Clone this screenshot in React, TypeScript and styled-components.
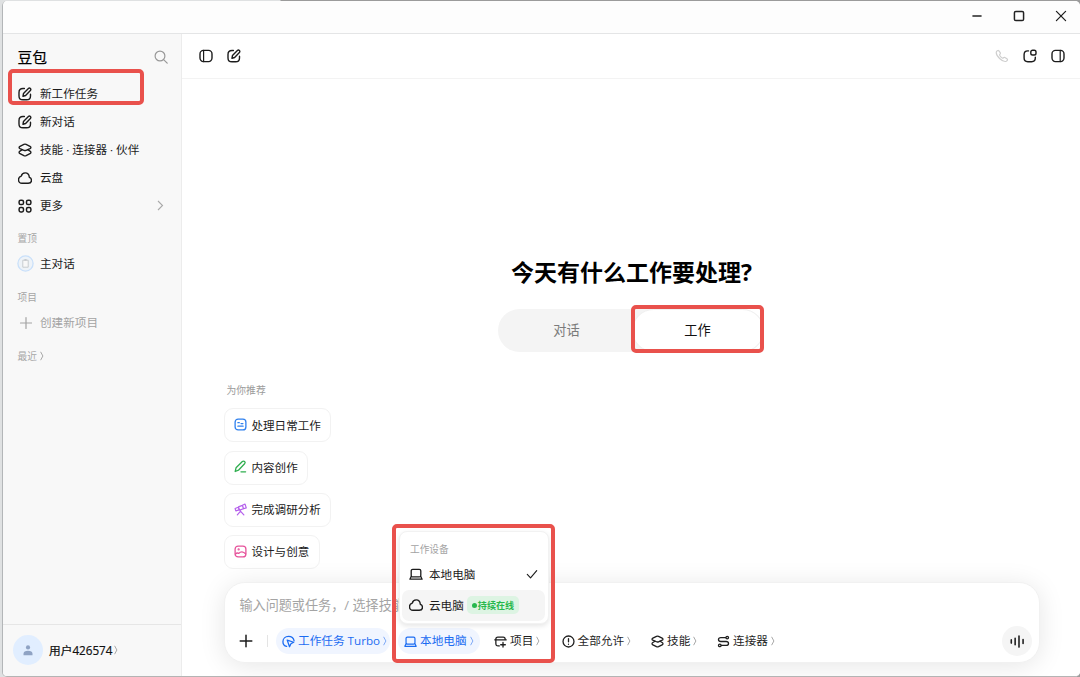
import React from "react";
import styled, { createGlobalStyle } from "styled-components";

const Global = createGlobalStyle`
  * { box-sizing: border-box; }
  html, body { margin: 0; padding: 0; overflow: hidden; }
  body {
    background: #e4e6e7;
    font-family: "Open Sans", "Noto Sans CJK SC", sans-serif;
    color: #1c1c1c;
    -webkit-font-smoothing: antialiased;
  }
`;

const Desktop = styled.div`
  width: 1080px;
  height: 677px;
  padding: 1px 0 0 2px;
  background: linear-gradient(90deg, #dfe1e2 0, #dfe1e2 280px, #9b9b9b 281px);
`;
const Window = styled.div`
  height: 676px;
  display: flex;
  flex-direction: column;
  background: #fff;
  border-left: 1px solid #b3b6b8;
  border-bottom: 1px solid #b4b4b4;
  border-radius: 5px;
  overflow: hidden;
`;
const TitleBar = styled.div`
  height: 32px;
  flex: none;
  display: flex;
  justify-content: flex-end;
  align-items: center;
  gap: 26px;
  padding: 0 11px 2px 0;
  background: #fdfdfd;
`;
const Body = styled.div`
  flex: 1;
  display: flex;
  min-height: 0;
  border-top: 1px solid #e4e5e6;
`;

const Sidebar = styled.aside`
  width: 179px;
  display: flex;
  flex-direction: column;
  background: #f8f8f8;
  border-right: 1px solid #ececec;
`;
const Brand = styled.div`
  display: flex;
  align-items: center;
  justify-content: space-between;
  height: 46px;
  padding: 0 13px 0 14.5px;
  font-size: 14.8px;
  color: #000;
  -webkit-text-stroke: 0.2px #000;
`;
const BrandName = styled.span`
  line-height: 20px;
`;
const NavItem = styled.div<{ $muted?: boolean }>`
  position: relative;
  height: 27.9px;
  flex: none;
  display: flex;
  align-items: center;
  gap: 8px;
  padding: 0 17px 0 15px;
  font-size: 11.6px;
  line-height: 16px;
  color: ${(p) => (p.$muted ? "#a3a3a3" : "#1c1c1c")};
  svg { flex: none; }
`;
const Grow = styled.span`
  flex: 1;
`;
const SectionLabel = styled.div<{ $top: number }>`
  height: 14px;
  flex: none;
  display: flex;
  align-items: center;
  gap: 3px;
  margin-top: ${(p) => p.$top}px;
  padding-left: 14.5px;
  font-size: 9.7px;
  color: #a6a6a6;
`;
const Pinned = styled(NavItem)`
  margin-top: 5px;
  padding-left: 14px;
  gap: 6px;
`;
const Create = styled(NavItem)`
  margin-top: 5px;
`;
const Account = styled.div`
  margin-top: auto;
  height: 52px;
  display: flex;
  align-items: center;
  gap: 6px;
  padding: 0 0 0.5px 10px;
  border-top: 1px solid #e6e6e6;
  font-size: 11.7px;
  color: #111;
`;
const Avatar = styled.div`
  width: 30px;
  height: 30px;
  border-radius: 50%;
  background: #e1eeff;
  display: grid;
  place-items: center;
`;
const AccountName = styled.span`
  display: flex;
  align-items: center;
  gap: 2px;
  padding-bottom: 1px;
  -webkit-text-stroke: 0.2px #111;
`;

const Highlight = styled.div<{ $t: number; $l: number; $w: number; $h: number }>`
  position: absolute;
  top: ${(p) => p.$t}px;
  left: ${(p) => p.$l}px;
  width: ${(p) => p.$w}px;
  height: ${(p) => p.$h}px;
  border: 4px solid #e9514c;
  border-radius: 5px;
  pointer-events: none;
  z-index: 5;
`;

const Main = styled.main`
  flex: 1;
  min-width: 0;
  display: flex;
  flex-direction: column;
  background: #fff;
`;
const Header = styled.header`
  height: 45px;
  flex: none;
  display: flex;
  align-items: center;
  justify-content: space-between;
  padding: 0 15px 0 16.5px;
  border-bottom: 1px solid #f3f3f3;
`;
const IconRow = styled.div`
  display: flex;
  align-items: center;
  gap: 14px;
`;
const Stage = styled.section`
  flex: 1;
  display: flex;
  flex-direction: column;
  padding: 0 40px 13px 42px;
`;
const Hero = styled.div`
  display: flex;
  flex-direction: column;
  align-items: center;
  padding-top: 175px;
`;
const Title = styled.h1`
  margin: 0 1px 0 0;
  height: 37px;
  line-height: 37px;
  font-size: 23px;
  font-weight: 700;
  color: #000;
  white-space: nowrap;
`;
const Segmented = styled.div`
  position: relative;
  width: 266px;
  height: 43px;
  margin-top: 18px;
  margin-right: 2px;
  display: flex;
  border-radius: 22px;
  background: #f4f4f4;
`;
const Segment = styled.div<{ $on?: boolean }>`
  flex: 1;
  display: grid;
  place-items: center;
  padding: 0 ${(p) => (p.$on ? 1 : 0)}px 2px ${(p) => (p.$on ? 0 : 3)}px;
  border-radius: 22px;
  font-size: 13.2px;
  color: ${(p) => (p.$on ? "#111" : "#7b7b7b")};
  background: ${(p) => (p.$on ? "#fff" : "transparent")};
  border: 1px solid ${(p) => (p.$on ? "#f0f0f0" : "transparent")};
`;

const Suggestions = styled.div`
  display: flex;
  flex-direction: column;
  align-items: flex-start;
  gap: 8.3px;
  margin-top: 31px;
`;
const SuggestLabel = styled.div`
  height: 16px;
  margin-bottom: 1px;
  line-height: 16px;
  padding-left: 2.5px;
  font-size: 9.8px;
  color: #9b9b9b;
`;
const Suggestion = styled.div`
  height: 34px;
  display: flex;
  align-items: center;
  gap: 4.5px;
  padding: 0 9.5px 1.5px 9px;
  border: 1px solid #f2f2f2;
  border-radius: 9px;
  font-size: 11.55px;
  color: #222;
`;

const Composer = styled.div`
  position: relative;
  height: 81px;
  margin-top: auto;
  display: flex;
  flex-direction: column;
  justify-content: space-between;
  padding: 11px 7px 6px 9px;
  border: 1px solid #f1f1f1;
  border-radius: 21px;
  background: #fff;
  box-shadow: 0 3px 26px rgba(0, 0, 0, 0.1);
`;
const Placeholder = styled.div`
  height: 22px;
  line-height: 22px;
  padding-left: 5.5px;
  font-size: 13.1px;
  color: #a4a4a4;
  white-space: nowrap;
`;
const Toolbar = styled.div`
  display: flex;
  align-items: center;
  height: 30px;
`;
const Plus = styled.span`
  width: 24px;
  display: grid;
  place-items: center;
`;
const Divider = styled.span`
  width: 1px;
  height: 12px;
  margin: 0 8px 0 9px;
  background: #e4e4e4;
`;
const Tool = styled.div<{ $w: number; $active?: boolean; $ml?: number }>`
  width: ${(p) => p.$w}px;
  margin-left: ${(p) => p.$ml ?? 0}px;
  height: 26px;
  flex: none;
  display: flex;
  align-items: center;
  gap: 3px;
  padding-left: 6px;
  border-radius: 13px;
  font-size: 11.65px;
  white-space: nowrap;
  color: ${(p) => (p.$active ? "#1b6cf2" : "#1f1f1f")};
  background: ${(p) => (p.$active ? "#f0f5ff" : "transparent")};
  svg { flex: none; }
`;
const ToolText = styled.span`
  line-height: 16px;
`;
const Voice = styled.div`
  width: 30px;
  height: 30px;
  margin-left: auto;
  border-radius: 50%;
  background: #f5f5f5;
  display: grid;
  place-items: center;
`;

const Menu = styled.div`
  position: absolute;
  left: 174px;
  top: -52px;
  width: 150px;
  height: 93px;
  padding: 8px 3px 3px 2px;
  border-radius: 8px;
  border: 1px solid #f2f2f2;
  background: #fff;
  box-shadow: 0 2px 5px rgba(0, 0, 0, 0.1);
`;
const MenuLabel = styled.div`
  height: 18px;
  line-height: 19px;
  padding-left: 8px;
  font-size: 9.7px;
  color: #a3a3a3;
`;
const MenuItem = styled.div<{ $hover?: boolean }>`
  height: 31.5px;
  display: flex;
  align-items: center;
  gap: 6px;
  padding: 0 7px 0 7px;
  border-radius: 7px;
  font-size: 11.6px;
  color: #1c1c1c;
  background: ${(p) => (p.$hover ? "#f5f5f5" : "transparent")};
  svg { flex: none; }
`;
const Badge = styled.span`
  height: 18px;
  display: flex;
  align-items: center;
  gap: 1px;
  margin-left: -3px;
  padding: 0 5px;
  border-radius: 5px;
  background: #ddf4e3;
  color: #27b84c;
  font-size: 9.1px;
  font-weight: 700;
  white-space: nowrap;
`;
const Dot = styled.i`
  width: 5px;
  height: 5px;
  border-radius: 50%;
  background: currentColor;
`;

type IconProps = {
  size?: number;
  color?: string;
  sw?: number;
  children?: React.ReactNode;
};
const Icon = ({ size = 14, color = "currentColor", sw = 1.4, children }: IconProps) => (
  <svg
    width={size}
    height={size}
    viewBox="0 0 14 14"
    fill="none"
    stroke={color}
    strokeWidth={sw}
    strokeLinecap="round"
    strokeLinejoin="round"
  >
    {children}
  </svg>
);

const Compose = (p: IconProps) => (
  <Icon {...p}>
    <path d="M6.400 1.500H5C2.400 1.500 1 2.900 1 5.400v3.500c0 2.500 1.400 3.900 4 3.900h3.500c2.600 0 4-1.400 4-3.900V7.300" />
    <path d="M5 9.200l.5-2.700 4.900-4.900c.6-.6 1.400-.6 2 0s.6 1.400 0 2L7.600 8.500 5 9.200z" />
  </Icon>
);
const Layers = (p: IconProps) => (
  <Icon {...p}>
    <path d="M5.900 1.400 2 3.300c-1.200.6-1.200 1.700 0 2.300l3.900 1.700c.7.300 1.500.3 2.200 0L12 5.600c1.200-.6 1.200-1.700 0-2.300L8.100 1.400c-.7-.3-1.500-.3-2.200 0z" />
    <path d="M4.300 6.700 2 8.100c-1.200.7-1.200 1.900 0 2.500l3.900 2c.7.300 1.500.3 2.200 0l3.900-2c1.200-.6 1.200-1.800 0-2.500L9.700 6.700" />
  </Icon>
);
const Cloud = (p: IconProps) => (
  <Icon {...p}>
    <path d="M4 12.300h6.200c1.900 0 3.300-1.200 3.300-3 0-1.500-.9-2.600-2.200-3C11.100 3.800 9.400 1.900 7.200 1.900c-2 0-3.500 1.300-3.900 3.200C1.600 5.500.5 6.900.5 8.700c0 2.100 1.400 3.600 3.500 3.600z" />
  </Icon>
);
const Grid = () => (
  <Icon sw={1.500}>
    <rect x="1.100" y="1.200" width="4.400" height="4.400" rx="1.600" />
    <rect x="8.500" y="1.200" width="4.400" height="4.400" rx="1.600" />
    <rect x="1.100" y="8.500" width="4.400" height="4.400" rx="1.600" />
    <rect x="8.500" y="8.500" width="4.400" height="4.400" rx="1.600" />
  </Icon>
);
const Panel = ({ x }: { x: number }) => (
  <Icon size={14}>
    <rect x="1" y="1.400" width="12" height="11.200" rx="3.500" />
    <path d={`M${x} 1.400v11.200`} strokeWidth="1.200" />
  </Icon>
);
const Laptop = (p: IconProps) => (
  <Icon {...p} sw={1.300}>
    <rect x="2.200" y="2.300" width="9.600" height="7.600" rx="1.500" />
    <path d="M2.200 9.500.9 12.200h12.200l-1.300-2.700" />
  </Icon>
);
const Caret = ({ color = "#a8a8a8" }: { color?: string }) => (
  <svg width="5" height="10" viewBox="0 0 5 10" fill="none" stroke={color} strokeWidth="1">
    <path d="M.6.800 2.900 5 .6 9.200" />
  </svg>
);

export default function App() {
  return (
    <>
      <Global />
      <Desktop>
        <Window>
          <TitleBar>
            <Icon size={16} color="#222" sw={1.200}><path d="M3 7h8" strokeLinecap="butt" /></Icon>
            <Icon size={16} color="#222" sw={1.300}><rect x="3" y="3" width="8" height="8" rx="1.200" /></Icon>
            <Icon size={16} color="#222" sw={1.100}><path d="m3 3 8 8m0-8-8 8" /></Icon>
          </TitleBar>
          <Body>
            <Sidebar>
              <Brand>
                <BrandName>豆包</BrandName>
                <Icon size={14} color="#999" sw={1.200}>
                  <circle cx="6" cy="6" r="4.900" />
                  <path d="m9.600 9.600 3.600 3.600" />
                </Icon>
              </Brand>
              <NavItem>
                <Highlight $t={-11} $l={5} $w={136} $h={36} />
                <Compose />新工作任务
              </NavItem>
              <NavItem><Compose />新对话</NavItem>
              <NavItem><Layers />技能 · 连接器 · 伙伴</NavItem>
              <NavItem><Cloud />云盘</NavItem>
              <NavItem>
                <Grid />更多<Grow />
                <svg width="7" height="11" viewBox="0 0 7 11" fill="none" stroke="#aaa" strokeWidth="1.100">
                  <path d="m1 1 4.500 4.500L1 10" />
                </svg>
              </NavItem>
              <SectionLabel $top={11.500}>置顶</SectionLabel>
              <Pinned>
                <svg width="17" height="17" viewBox="0 0 17 17" fill="none">
                  <circle cx="8.500" cy="8.500" r="7.600" fill="#eef3f8" stroke="#c9e0fa" strokeWidth="1.300" />
                  <path d="M5.800 5.200h5.400v7H5.800z" fill="#f8f8f8" stroke="#c4c8cc" strokeWidth=".9" />
                  <path d="M7.400 4.900h2.200" stroke="#b4b8bc" />
                </svg>
                主对话
              </Pinned>
              <SectionLabel $top={12}>项目</SectionLabel>
              <Create $muted>
                <Icon sw={1.200}><path d="M8 1.500v11M2.500 7h11" /></Icon>创建新项目
              </Create>
              <SectionLabel $top={12.500}>最近<Caret /></SectionLabel>
              <Account>
                <Avatar>
                  <svg width="10" height="11" viewBox="0 0 10 11" fill="#8fa3c4">
                    <circle cx="5" cy="2.400" r="2.100" />
                    <path d="M.5 10.300V8.800C.5 6.800 2.200 5.700 5 5.700s4.500 1.100 4.500 3.100v1.500z" />
                  </svg>
                </Avatar>
                <AccountName>用户426574<Caret /></AccountName>
              </Account>
            </Sidebar>
            <Main>
              <Header>
                <IconRow>
                  <Panel x={4.600} />
                  <Compose />
                </IconRow>
                <IconRow>
                  <Icon color="#cfcfcf" sw={1.200}>
                    <path d="M1.400 2.800c.4-.9 1.600-1.700 2.300-1.100l1.500 2c.5.700.2 1.200-.5 1.900-.3.300-.1.900 1.100 2.200s2 1.500 2.300 1.200c.7-.7 1.200-1 1.900-.5l2.200 1.400c.7.600 0 1.900-1 2.400C7.800 13.700.3 6.500 1.400 2.800z" />
                  </Icon>
                  <Icon>
                    <path d="M5.500 1.900H4.800C2.400 1.900 1.100 3.100 1.100 5.500v3.600c0 2.400 1.300 3.600 3.700 3.600h3.800c2.400 0 3.700-1.200 3.700-3.600v-.9" />
                    <rect x="7.800" y="1.300" width="5.200" height="4.700" rx="1.800" />
                  </Icon>
                  <Panel x={9.200} />
                </IconRow>
              </Header>
              <Stage>
                <Hero>
                  <Title>今天有什么工作要处理?</Title>
                  <Segmented>
                    <Segment>对话</Segment>
                    <Segment $on>工作</Segment>
                    <Highlight $t={-4} $l={133} $w={133} $h={48} />
                  </Segmented>
                </Hero>
                <Suggestions>
                  <SuggestLabel>为你推荐</SuggestLabel>
                  <Suggestion>
                    <Icon size={13} color="#2f80ee">
                      <rect x="1.200" y="1.200" width="11.600" height="11.600" rx="3.200" />
                      <path d="M4.200 5h1.500M4.200 8.800h5.600M7.600 6h2" />
                    </Icon>
                    处理日常工作
                  </Suggestion>
                  <Suggestion>
                    <Icon size={13} color="#2fae4f">
                      <path d="m1.300 12.400.9-4L9 1.700c.7-.7 1.700-.7 2.400 0s.7 1.700 0 2.400L4.800 11l-3.500 1.400zM7.500 12.700h5" />
                    </Icon>
                    内容创作
                  </Suggestion>
                  <Suggestion>
                    <Icon size={13} color="#b560ec" sw={1.300}>
                      <path d="m9 2.400 2.900-1.200 1.300 4-2.900 1zM4.800 4.200 9 2.600l1.200 3.600L6 7.600zM1.200 6l3.400-1.500.9 2.900L2 8.500zM7 8v1.500M6.600 9.200l-3 3.600M7.400 9.200l3.200 3.600" />
                    </Icon>
                    完成调研分析
                  </Suggestion>
                  <Suggestion>
                    <Icon size={13} color="#e6539b">
                      <rect x="1.200" y="1.200" width="11.600" height="11.600" rx="3.200" />
                      <circle cx="5" cy="4.800" r=".5" />
                      <path d="M1.500 9.800c1.200-1.300 2.500-1.500 3.700-.8C7 6.800 10 6.600 12.500 9.600" />
                    </Icon>
                    设计与创意
                  </Suggestion>
                </Suggestions>
                <Composer>
                  <Placeholder>输入问题或任务，/ 选择技能</Placeholder>
                  <Toolbar>
                    <Plus><Icon sw={1.500}><path d="M7 1.200v11.600M1.200 7h11.600" /></Icon></Plus>
                    <Divider />
                    <Tool $w={114} $active>
                      <Icon size={13}>
                        <path d="M5 12.300C2.600 11.700 1 9.700 1 7.200 1 3.800 3.500 1.500 7 1.500c3.300 0 5.500 1.800 6 4.700" />
                        <path d="m5.600 5.500 7 2.300-3 1.600-1.500 3.200z" />
                      </Icon>
                      <ToolText>工作任务 Turbo</ToolText><Caret color="#7faaf6" />
                    </Tool>
                    <Tool $w={82} $active $ml={8}>
                      <Laptop size={13} /><ToolText>本地电脑</ToolText><Caret color="#7faaf6" />
                    </Tool>
                    <Tool $w={60} $ml={8}>
                      <Icon size={13}>
                        <path d="M4.500 11.800C2.700 11.800 2 11 2 9.200V4.400C2 3 2.800 2.200 4.200 2.200h5.600c1.400 0 2.200.7 2.200 2M.8 5.200h12.400M4.500 11.800h1.200M9.700 8v5M7.200 10.500h5" />
                      </Icon>
                      <ToolText>项目</ToolText><Caret />
                    </Tool>
                    <Tool $w={86} $ml={7.500}>
                      <Icon size={13}>
                        <circle cx="7" cy="7" r="5.900" />
                        <path d="M7 3.900v3.500M7 9.900v.1" />
                      </Icon>
                      <ToolText>全部允许</ToolText><Caret />
                    </Tool>
                    <Tool $w={60} $ml={3.500}>
                      <Layers size={13} /><ToolText>技能</ToolText><Caret />
                    </Tool>
                    <Tool $w={70} $ml={6}>
                      <Icon size={13}>
                        <path d="M9.300 2.800H4.300C2.600 2.800 1.600 3.600 1.600 4.900S2.600 7 4.300 7h5.400c1.700 0 2.700.8 2.700 2.100s-1 2.100-2.700 2.100H4.700" />
                        <circle cx="11" cy="2.800" r="1.400" />
                        <circle cx="3" cy="11.200" r="1.400" />
                      </Icon>
                      <ToolText>连接器</ToolText><Caret />
                    </Tool>
                    <Voice>
                      <Icon size={15} color="#222" sw={1.500}>
                        <path d="M1.200 5.500v3M4.800 4v6M8.400 1.800v10.400M12.200 5.200v3.600" />
                      </Icon>
                    </Voice>
                  </Toolbar>
                  <Menu>
                    <MenuLabel>工作设备</MenuLabel>
                    <MenuItem>
                      <Laptop />本地电脑<Grow />
                      <Icon size={12} sw={1.300}><path d="m1.500 7.500 3.800 4 7.200-8.500" /></Icon>
                    </MenuItem>
                    <MenuItem $hover>
                      <Cloud />云电脑
                      <Badge><Dot />持续在线</Badge>
                    </MenuItem>
                  </Menu>
                  <Highlight $t={-59} $l={167} $w={163} $h={139} />
                </Composer>
              </Stage>
            </Main>
          </Body>
        </Window>
      </Desktop>
    </>
  );
}
